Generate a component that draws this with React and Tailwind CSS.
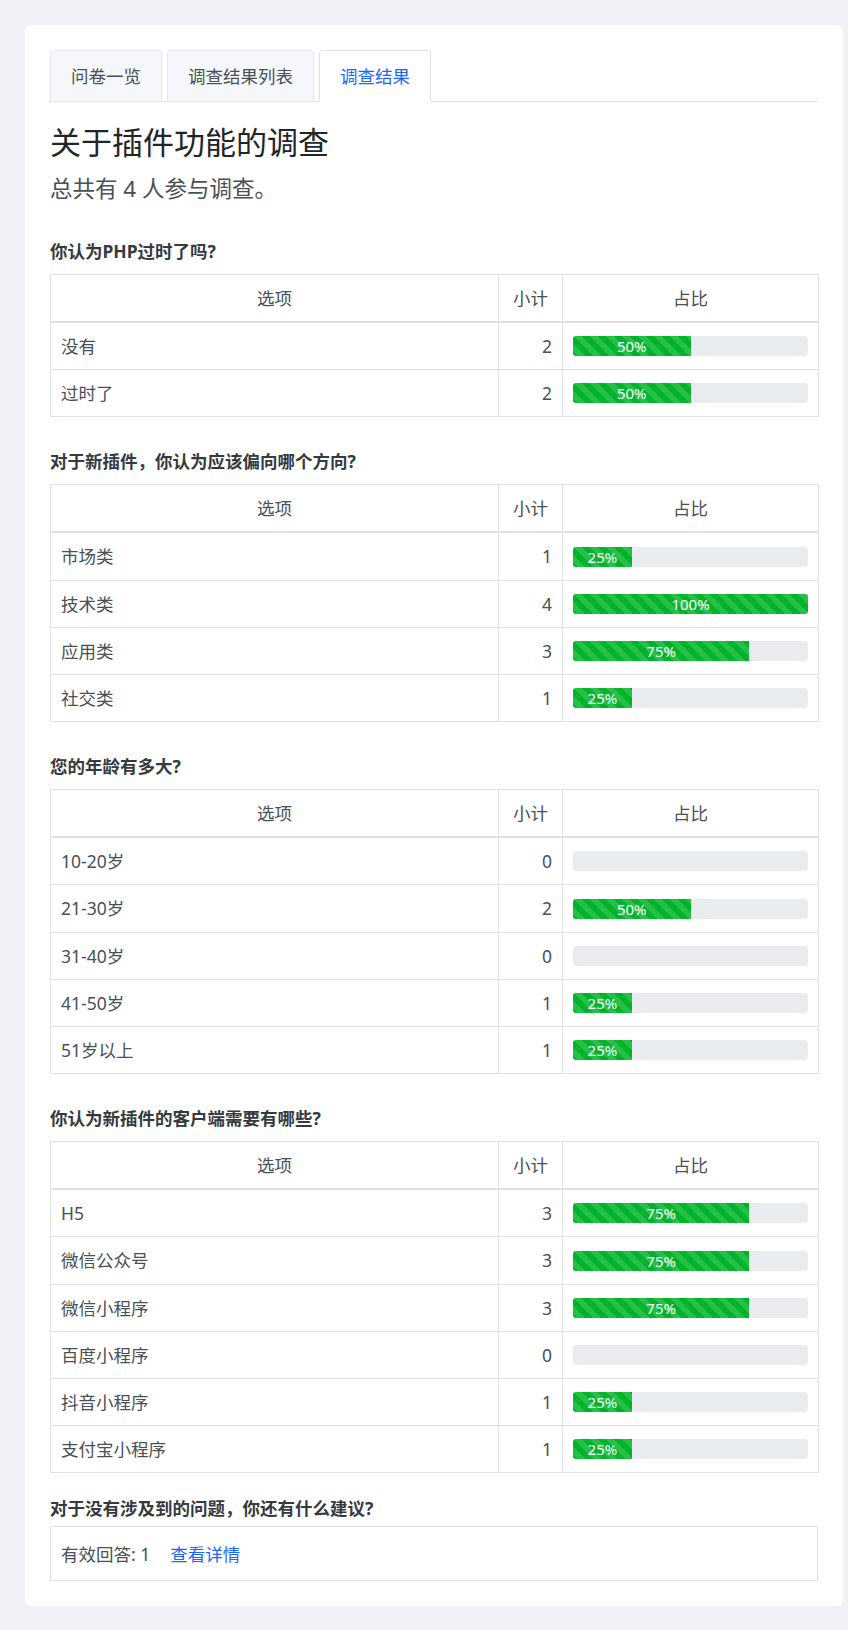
import React from "react";

const font = { fontFamily: '"Noto Sans", "Noto Sans CJK SC", sans-serif' };

const sections = [
  {
    q: "你认为PHP过时了吗?",
    rows: [
      ["没有", 2, 50],
      ["过时了", 2, 50],
    ],
  },
  {
    q: "对于新插件，你认为应该偏向哪个方向?",
    rows: [
      ["市场类", 1, 25],
      ["技术类", 4, 100],
      ["应用类", 3, 75],
      ["社交类", 1, 25],
    ],
  },
  {
    q: "您的年龄有多大?",
    rows: [
      ["10-20岁", 0, 0],
      ["21-30岁", 2, 50],
      ["31-40岁", 0, 0],
      ["41-50岁", 1, 25],
      ["51岁以上", 1, 25],
    ],
  },
  {
    q: "你认为新插件的客户端需要有哪些?",
    rows: [
      ["H5", 3, 75],
      ["微信公众号", 3, 75],
      ["微信小程序", 3, 75],
      ["百度小程序", 0, 0],
      ["抖音小程序", 1, 25],
      ["支付宝小程序", 1, 25],
    ],
  },
];

function Bar({ pct }) {
  return (
    <div className="h-[20px] w-full rounded-[3px] bg-[#e9ecef] overflow-hidden flex">
      {pct > 0 && (
        <div
          className="h-full flex items-center justify-center text-white text-[15px] leading-[20px] bg-[#00b42a] bg-[linear-gradient(45deg,rgba(255,255,255,.15)_25%,transparent_25%,transparent_50%,rgba(255,255,255,.15)_50%,rgba(255,255,255,.15)_75%,transparent_75%,transparent)] bg-[length:16px_16px]"
          style={{ width: pct + "%" }}
        >
          {pct}%
        </div>
      )}
    </div>
  );
}

function Table({ rows }) {
  return (
    <table className="w-full table-fixed border-collapse border border-[#dee2e6] text-[#495057]">
      <colgroup>
        <col className="w-[448px]" />
        <col className="w-[64px]" />
        <col className="w-[256px]" />
      </colgroup>
      <thead>
        <tr className="border-b-2 border-[#dee2e6]">
          <th className="border border-[#dee2e6] border-b-2 px-[10px] py-[10px] font-normal text-center leading-[26px]">选项</th>
          <th className="border border-[#dee2e6] border-b-2 px-[10px] py-[10px] font-normal text-center leading-[26px]">小计</th>
          <th className="border border-[#dee2e6] border-b-2 px-[10px] py-[10px] font-normal text-center leading-[26px]">占比</th>
        </tr>
      </thead>
      <tbody>
        {rows.map(([name, n, pct]) => (
          <tr key={name}>
            <td className="border border-[#dee2e6] px-[10px] py-[10px] leading-[26.2px]">{name}</td>
            <td className="border border-[#dee2e6] px-[10px] py-[10px] leading-[26.2px] text-right">{n}</td>
            <td className="border border-[#dee2e6] px-[10px] py-[10px] leading-[26.2px]">
              <Bar pct={pct} />
            </td>
          </tr>
        ))}
      </tbody>
    </table>
  );
}

export default function App() {
  return (
    <div className="min-h-[1630px] bg-[#f0f2f5] pt-[25px] pl-[25px] text-[17.5px]" style={font}>
      <div className="w-[818px] rounded-[6px] bg-white p-[25px]">
        <div className="flex gap-[5px] border-b border-[#dee2e6]">
          <div className="-mb-px flex h-[52px] items-center rounded-t-[4px] border border-[#e4e7ed] bg-[#f5f7fa] px-5 text-[#495057]">问卷一览</div>
          <div className="-mb-px flex h-[52px] items-center rounded-t-[4px] border border-[#e4e7ed] bg-[#f5f7fa] px-5 text-[#495057]">调查结果列表</div>
          <div className="-mb-px flex h-[52px] items-center rounded-t-[4px] border border-[#dee2e6] border-b-white bg-white px-5 text-[#1a66ff]">调查结果</div>
        </div>

        <h1 className="mt-[22px] text-[31px] leading-[37px] text-[#212529]">关于插件功能的调查</h1>
        <h4 className="mt-[15px] text-[22.5px] leading-[26px] text-[#495057]">总共有 4 人参与调查。</h4>

        {sections.map((s, i) => (
          <div key={s.q}>
            <h5 className={(i === 0 ? "mt-[36px]" : "mt-[31px]") + " mb-[10px] font-bold leading-[26px] text-[#343a40]"}>{s.q}</h5>
            <Table rows={s.rows} />
          </div>
        ))}

        <h5 className="mt-[22px] mb-[5px] font-bold leading-[26px] text-[#343a40]">对于没有涉及到的问题，你还有什么建议?</h5>
        <div className="flex h-[55px] items-center border border-[#dee2e6] px-[10px] text-[#495057]">
          <span>有效回答: 1</span>
          <a className="ml-[20px] text-[#1a66ff]">查看详情</a>
        </div>
      </div>
    </div>
  );
}
